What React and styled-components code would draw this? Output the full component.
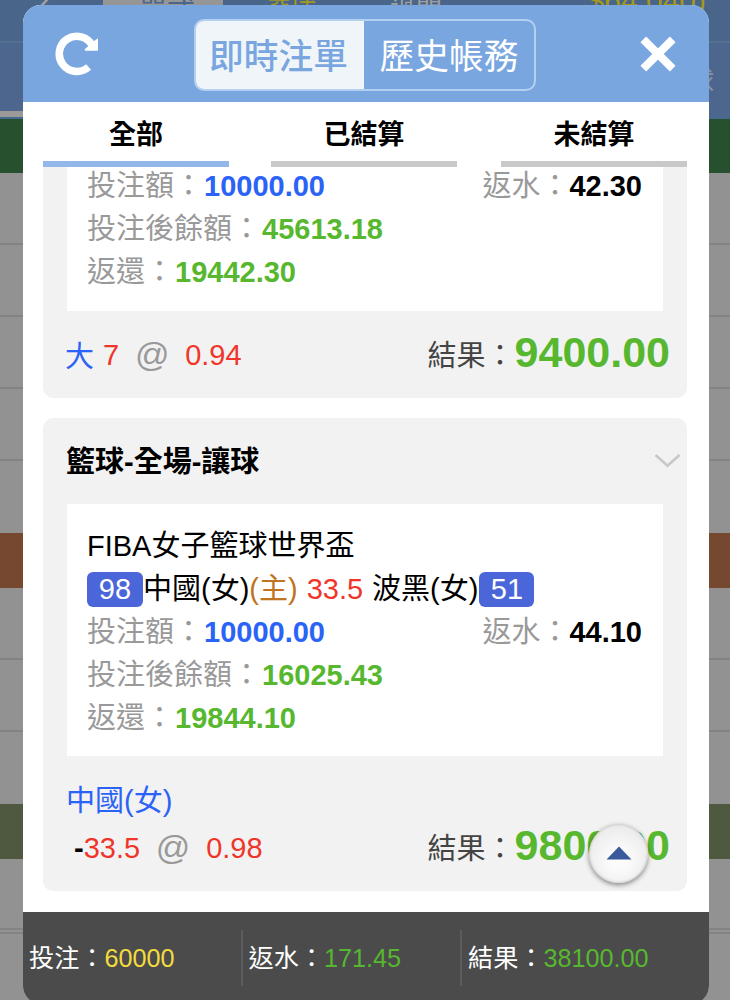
import React from 'react'
import styled, { createGlobalStyle } from 'styled-components'

const bets = [
  {
    id: 1,
    rows: [
      { label: '投注額：', value: '10000.00', color: '#2a63f6', rebate: '42.30' },
      { label: '投注後餘額：', value: '45613.18', color: '#57b82f' },
      { label: '返還：', value: '19442.30', color: '#57b82f' }
    ],
    result: '9400.00'
  },
  {
    id: 2,
    rows: [
      { label: '投注額：', value: '10000.00', color: '#2a63f6', rebate: '44.10' },
      { label: '投注後餘額：', value: '16025.43', color: '#57b82f' },
      { label: '返還：', value: '19844.10', color: '#57b82f' }
    ],
    result: '9800.00'
  }
]

const stripes = [
  { h: 54, bg: '#27502f' },
  { h: 72 }, { h: 72 }, { h: 72 }, { h: 72 }, { h: 72, last: true },
  { h: 55, bg: '#774830' },
  { h: 72 }, { h: 72 }, { h: 72, last: true },
  { h: 55, bg: '#4e5940' },
  { h: 71 }, { h: 4 }, { h: 66, last: true }
]

const Amounts = ({ rows }) => rows.map(r => (
  <Line key={r.label}>
    <Label>{r.label}</Label>
    <Amount $color={r.color}>{r.value}</Amount>
    {r.rebate && (
      <Rebate>
        <Label>返水：</Label>
        <Amount $color="#000">{r.rebate}</Amount>
      </Rebate>
    )}
  </Line>
))

const Result = ({ value }) => (
  <ResultWrap>
    <ResultLabel>結果：</ResultLabel>
    <ResultValue>{value}</ResultValue>
  </ResultWrap>
)

const App = () => (
  <Page>
    <Global />
    <TopNav>
      <Back>‹</Back>
      <NavActive>單式</NavActive>
      <NavItem $left={41} $color="#a39a1c">滾球</NavItem>
      <NavItem $left={74}>過關</NavItem>
      <Balance>$64,040)</Balance>
    </TopNav>
    <SubNav>
      <SubText>球</SubText>
    </SubNav>
    <SubLine><span /></SubLine>
    {stripes.map((s, i) => <Stripe key={i} $h={s.h} $bg={s.bg} $last={s.last} />)}

    <Modal>
      <Header>
        <svg width="44" height="44" viewBox="0 0 44 44">
          <path d="M34.6 35 A17.6 17.6 0 1 1 38.4 13.6" fill="none" stroke="#fff" strokeWidth="7.6" />
          <path d="M44 6.3 V18.8 H31.3 L30.5 17.5 L38 10.5 Z" fill="#fff" />
        </svg>
        <Segment>
          <SegmentItem $active>即時注單</SegmentItem>
          <SegmentItem>歷史帳務</SegmentItem>
        </Segment>
        <svg width="36" height="36" viewBox="0 0 36 36">
          <path d="M3.3 3.3 L32.7 32.7 M32.7 3.3 L3.3 32.7" stroke="#fff" strokeWidth="8" />
        </svg>
      </Header>
      <Tabs>
        <Tab $active>全部</Tab>
        <Tab>已結算</Tab>
        <Tab>未結算</Tab>
      </Tabs>
      <List>
        <Card $first>
          <Detail $first>
            <Amounts rows={bets[0].rows} />
          </Detail>
          <Pick $first>
            <Blue>大</Blue>
            <Red $left={9}>7</Red>
            <At>@</At>
            <Red>0.94</Red>
            <Result value={bets[0].result} />
          </Pick>
        </Card>
        <Card>
          <Title>
            籃球-全場-讓球
            <svg width="27" height="16" viewBox="0 0 27 16">
              <path d="M1.5 2 L13.5 12.8 L25.5 2" fill="none" stroke="#c8c8c8" strokeWidth="2.6" />
            </svg>
          </Title>
          <Detail>
            <Line>FIBA女子籃球世界盃</Line>
            <Line>
              <Score>98</Score>
              中國(女)
              <Host>(主)</Host>
              <Red $left={9}>33.5</Red>
              <Away>波黑(女)</Away>
              <Score $w={55}>51</Score>
            </Line>
            <Amounts rows={bets[1].rows} />
          </Detail>
          <Team>中國(女)</Team>
          <Pick>
            <Minus>-</Minus>
            <Red>33.5</Red>
            <At>@</At>
            <Red>0.98</Red>
            <Result value={bets[1].result} />
          </Pick>
        </Card>
      </List>
      <Footer>
        <Total>投注：<Sum $color="#f3dc3e">60000</Sum></Total>
        <Total>返水：<Sum>171.45</Sum></Total>
        <Total>結果：<Sum>38100.00</Sum></Total>
      </Footer>
      <ToTop>
        <svg width="26" height="14" viewBox="0 0 26 14">
          <path d="M13 0.5 L25.5 13.5 H0.5 Z" fill="#3a5a9b" />
        </svg>
      </ToTop>
    </Modal>
  </Page>
)

export default App

const Global = createGlobalStyle`
  * {
    box-sizing: border-box;
  }
  body {
    margin: 0;
    overflow: hidden;
  }
`

const Page = styled.div`
  position: relative;
  width: 730px;
  height: 1000px;
  overflow: hidden;
  background-color: #929292;
  font-family: "Liberation Sans", "Noto Sans CJK TC", sans-serif;
  font-size: 29px;
  color: #000;
`
const TopNav = styled.div`
  display: flex;
  align-items: flex-start;
  height: 43px;
  background-color: #4a658a;
  border-bottom: 2px solid #557191;
  font-size: 26px;
  line-height: 30px;
  color: #a0a0a0;
`
const Back = styled.div`
  width: 103px;
  padding-left: 38px;
  margin-top: -12px;
  font-size: 34px;
`
const NavActive = styled.div`
  width: 120px;
  height: 34px;
  padding-left: 8px;
  background-color: #969696;
  color: #4a658a;
  font-size: 28px;
  line-height: 24px;
  text-align: center;
`
const NavItem = styled.div`
  margin: -5px 0 0 ${p => p.$left}px;
  color: ${p => p.$color || '#a0a0a0'};
`
const Balance = styled.div`
  margin: -14px 24px 0 auto;
  font-size: 30px;
  color: #a39a1c;
`
const SubNav = styled.div`
  display: flex;
  justify-content: flex-end;
  align-items: center;
  height: 68px;
  padding: 4px 16px 0 0;
  background-color: #4c668d;
`
const SubText = styled.div`
  font-size: 26px;
  color: #8c949b;
`
const SubLine = styled.div`
  display: flex;
  height: 8px;
  background-color: #4c668d;
  border-bottom: 2px solid #47698f;
  span {
    width: 365px;
    height: 6px;
    background-color: #9b9a98;
  }
`
const Stripe = styled.div`
  height: ${p => p.$h}px;
  background-color: ${p => p.$bg || '#929292'};
  border-bottom: ${p => (p.$bg || p.$last ? 'none' : '2px solid #838383')};
`

const Modal = styled.div`
  position: absolute;
  top: 5px;
  left: 23px;
  display: flex;
  flex-direction: column;
  width: 685.5px;
  height: 999px;
  overflow: hidden;
  background-color: #fff;
  border-radius: 18px;
`
const Header = styled.div`
  display: flex;
  flex-shrink: 0;
  align-items: center;
  height: 97px;
  padding: 0 33px 0 31px;
  background-color: #7aa6e0;
  > svg:last-child {
    margin-left: auto;
  }
`
const Segment = styled.div`
  display: flex;
  width: 342px;
  height: 72px;
  margin: 2px 0 0 96px;
  border: 2px solid #b4cff0;
  border-radius: 10px;
  overflow: hidden;
`
const SegmentItem = styled.div`
  flex: 1;
  padding-right: ${p => (p.$active ? 3 : 0)}px;
  line-height: 73px;
  text-align: center;
  font-size: 34.7px;
  font-weight: ${p => (p.$active ? 500 : 400)};
  color: ${p => (p.$active ? '#7aa6e0' : '#fff')};
  background-color: ${p => (p.$active ? '#f0f5fa' : 'transparent')};
  &:last-child {
    flex: 0 0 170px;
  }
`
const Tabs = styled.div`
  display: flex;
  flex-shrink: 0;
  justify-content: space-between;
  height: 65px;
  padding: 0 21.5px 0 20px;
`
const Tab = styled.div`
  width: 186px;
  border-bottom: 6px solid ${p => (p.$active ? '#93b7e8' : '#c9c9c9')};
  line-height: 67px;
  text-align: center;
  font-size: 27px;
  font-weight: bold;
  &:nth-child(2) {
    margin-right: 2px;
  }
`
const List = styled.div`
  flex: 1;
  padding: 0 21.5px 0 20px;
  overflow: hidden;
`
const Card = styled.div`
  height: ${p => (p.$first ? 231 : 473)}px;
  margin-bottom: 20px;
  padding: 0 24px;
  border-radius: ${p => (p.$first ? '0 0 10px 10px' : '10px')};
  background-color: #f2f2f2;
`
const Title = styled.div`
  display: flex;
  justify-content: space-between;
  align-items: center;
  height: 86px;
  margin: 0 -18px 0 -1px;
  padding-bottom: 4px;
  font-weight: bold;
  svg {
    margin-top: 4px;
  }
`
const Detail = styled.div`
  display: flow-root;
  height: ${p => (p.$first ? 144 : 252)}px;
  padding: ${p => (p.$first ? 0 : 21)}px 21px 0 20px;
  background-color: #fff;
  > div:first-child {
    margin-top: ${p => (p.$first ? -2 : 0)}px;
  }
`
const Line = styled.div`
  display: flex;
  align-items: center;
  height: 43px;
  line-height: 43px;
  white-space: nowrap;
`
const Label = styled.span`
  margin-right: 1px;
  color: #999;
`
const Amount = styled.span`
  font-weight: bold;
  color: ${p => p.$color};
`
const Rebate = styled.div`
  margin-left: auto;
  ${Label} {
    margin-right: 0;
  }
`
const Score = styled.span`
  width: ${p => p.$w || 56}px;
  height: 35px;
  border-radius: 6px;
  background-color: #4a66d9;
  line-height: 35px;
  text-align: center;
  color: #fff;
`
const Host = styled.span`
  color: #c0741f;
`
const Away = styled.span`
  margin: 0 1px 0 9px;
`
const Blue = styled.span`
  margin-left: -2px;
  padding-bottom: 3px;
  color: #2a63f6;
`
const Red = styled.span`
  margin-left: ${p => p.$left || 0}px;
  color: #f0362a;
`
const At = styled.span`
  width: 66px;
  padding-bottom: 1px;
  text-align: center;
  font-size: 34px;
  color: #999;
`
const Minus = styled.span`
  margin-left: 7px;
  font-weight: bold;
`
const Team = styled.div`
  height: 47px;
  margin-left: -1px;
  padding-top: 24px;
  line-height: 43px;
  color: #2a63f6;
`
const Pick = styled.div`
  display: flex;
  align-items: center;
  height: ${p => (p.$first ? 88 : 90)}px;
`
const ResultWrap = styled.div`
  display: flex;
  align-items: center;
  margin: 0 -7px 0 auto;
`
const ResultLabel = styled.span`
  padding-bottom: 4px;
  color: #444;
`
const ResultValue = styled.span`
  padding-bottom: 6px;
  font-size: 43px;
  font-weight: bold;
  color: #57b82f;
`
const Footer = styled.div`
  display: flex;
  flex-shrink: 0;
  align-items: center;
  height: 92px;
  background-color: #4b4b4b;
`
const Total = styled.div`
  width: 219.5px;
  height: 56px;
  padding-left: 6px;
  line-height: 56px;
  font-size: 25.2px;
  color: #fff;
  border-right: 2px solid #5c5c5c;
  &:last-child {
    border-right: none;
  }
`
const Sum = styled.span`
  color: ${p => p.$color || '#57b82f'};
`
const ToTop = styled.div`
  position: absolute;
  top: 818.5px;
  left: 565.5px;
  display: flex;
  justify-content: center;
  align-items: center;
  width: 59px;
  height: 59px;
  padding: 0 0 1px 1px;
  border-radius: 50%;
  background: radial-gradient(circle at 50% 60%, #fbfbfb 20%, #efefef 60%, #e4e4e4 100%);
  box-shadow: 0 2px 5px rgba(0, 0, 0, 0.45), inset 0 0 3px rgba(0, 0, 0, 0.25);
`
